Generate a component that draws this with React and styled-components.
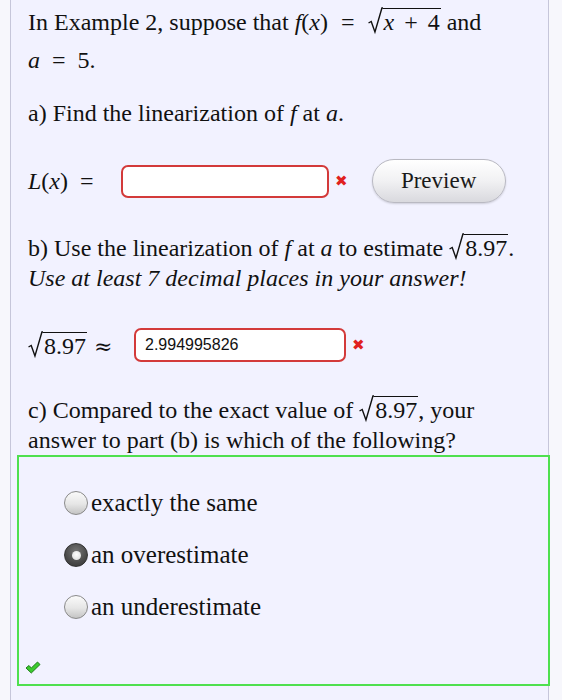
import React from 'react';
import styled, { createGlobalStyle } from 'styled-components';

const GlobalStyle = createGlobalStyle`
  html, body {
    margin: 0;
    padding: 0;
    background: #f7f7fc;
  }
  body {
    font-family: "Liberation Serif", "Times New Roman", serif;
    color: #111;
  }
`;

const Sqrt = ({ children }) => (
  <SqrtWrap>
    <Radical viewBox="0 0 14 28" preserveAspectRatio="none">
      <path d="M0.5 16 L3 14.5 L6.5 25 L13 1 L14 1" fill="none" stroke="#111" strokeWidth="1.3" />
    </Radical>
    <Radicand>{children}</Radicand>
  </SqrtWrap>
);

const Cross = ({ gap }) => <RedCross $gap={gap}>✖</RedCross>;

const Radio = ({ checked }) => (
  <RadioCircle $checked={checked}>
    {checked && <RadioDot />}
  </RadioCircle>
);

const Option = ({ checked, label }) => (
  <OptionRow>
    <Radio checked={checked} />
    <OptionLabel>{label}</OptionLabel>
  </OptionRow>
);

const CheckMark = () => (
  <svg width="16" height="13" viewBox="0 0 16 13">
    <path d="M1 7 L4 4.5 L6.3 7 L12.5 1 L15 3.5 L6.3 12 Z" fill="#3ccb2e" stroke="#1f7d1a" strokeWidth="1" strokeLinejoin="round" />
  </svg>
);

export default function App() {
  return (
    <>
      <GlobalStyle />
      <Panel>
        <Intro>
          In Example 2, suppose that <I>f</I>(<I>x</I>)<Op $gap={13}>=</Op><Sqrt><I>x</I><Op $gap={10}>+</Op>4</Sqrt> and
          <br />
          <I>a</I><Op $gap={12}>=</Op>5.
        </Intro>

        <Para $top={19}>
          a) Find the linearization of <I>f</I> at <I>a</I>.
        </Para>

        <AnswerRow $top={31}>
          <MathLabel $width={93}>
            <I>L</I>(<I>x</I>)<Op $gap={12}>=</Op>
          </MathLabel>
          <AnswerInput $width={208} $height={33} />
          <Cross gap={24} />
          <PreviewButton>Preview</PreviewButton>
        </AnswerRow>

        <Para $top={30}>
          b) Use the linearization of <I>f</I> at <I>a</I> to estimate <Sqrt>8.97</Sqrt>.
          <br />
          <I>Use at least 7 decimal places in your answer!</I>
        </Para>

        <AnswerRow $top={30}>
          <MathLabel $width={106}>
            <Sqrt>8.97</Sqrt><Approx>≈</Approx>
          </MathLabel>
          <AnswerInput $width={212} $height={34}>2.994995826</AnswerInput>
          <Cross gap={0} />
        </AnswerRow>

        <Para $top={28}>
          c) Compared to the exact value of <Sqrt>8.97</Sqrt>, your
          <br />
          answer to part (b) is which of the following?
        </Para>

        <ChoiceBox>
          <Option label="exactly the same" />
          <Option checked label="an overestimate" />
          <Option label="an underestimate" />
          <Status>
            <CheckMark />
          </Status>
        </ChoiceBox>
      </Panel>
    </>
  );
}

const Panel = styled.div`
  box-sizing: border-box;
  margin-left: 10px;
  width: 539px;
  min-height: 700px;
  padding: 3px 10px 0 17px;
  background: #f2f2ff;
  border-left: 1px solid #c6c6da;
  border-right: 1px solid #c6c6da;
  font-size: 24px;
`;

const Intro = styled.div`
  line-height: 38px;
  white-space: nowrap;
`;

const Para = styled.div`
  margin-top: ${p => p.$top}px;
  line-height: 30px;
  white-space: nowrap;
`;

const I = styled.i`
  font-style: italic;
`;

const Op = styled.span`
  margin: 0 ${p => p.$gap}px;
`;

const Approx = styled.span`
  font-family: "DejaVu Serif", serif;
  font-size: 22px;
  margin-left: 7px;
`;

const SqrtWrap = styled.span`
  display: inline-flex;
  align-items: stretch;
  vertical-align: -5px;
  height: 28px;
  line-height: 28px;
`;

const Radical = styled.svg`
  width: 15px;
  height: 28px;
  flex: none;
`;

const Radicand = styled.span`
  border-top: 1.3px solid #111;
  padding: 0 1px;
  margin-top: 1px;
  line-height: 26px;
`;

const AnswerRow = styled.div`
  margin-top: ${p => p.$top}px;
  display: flex;
  align-items: center;
  min-height: 44px;
`;

const MathLabel = styled.span`
  box-sizing: border-box;
  width: ${p => p.$width}px;
  flex: none;
  white-space: nowrap;
`;

const AnswerInput = styled.div`
  box-sizing: border-box;
  width: ${p => p.$width}px;
  height: ${p => p.$height}px;
  border: 2px solid #d33a3a;
  border-radius: 7px;
  background: #fff;
  padding-left: 9px;
  display: flex;
  align-items: center;
  font-family: "Liberation Sans", Arial, sans-serif;
  font-size: 16px;
  color: #111;
`;

const RedCross = styled.span`
  color: #e02020;
  font-family: "DejaVu Sans", sans-serif;
  font-size: 15px;
  margin-left: 6px;
  margin-right: ${p => p.$gap}px;
`;

const PreviewButton = styled.button`
  width: 134px;
  height: 44px;
  border-radius: 22px;
  border: 1px solid #b9b9c2;
  background: linear-gradient(to bottom, #ffffff 0%, #f1f1f3 50%, #d9d9de 100%);
  box-shadow: 0 1px 2px rgba(0, 0, 0, 0.15);
  font-family: "Liberation Serif", "Times New Roman", serif;
  font-size: 23px;
  color: #1a1a1a;
  padding: 0;
`;

const ChoiceBox = styled.div`
  box-sizing: border-box;
  margin-left: -11px;
  width: 533px;
  height: 231px;
  border: 2px solid #4fe04f;
  padding: 20px 0 0 45px;
  position: relative;
`;

const OptionRow = styled.div`
  display: flex;
  align-items: center;
  height: 52px;
`;

const RadioCircle = styled.span`
  box-sizing: border-box;
  width: 24px;
  height: 24px;
  border-radius: 50%;
  margin-right: 3px;
  display: flex;
  align-items: center;
  justify-content: center;
  border: 1px solid ${p => (p.$checked ? '#333' : '#8a8a8a')};
  background: ${p =>
    p.$checked
      ? 'radial-gradient(circle at 50% 35%, #777 0%, #4a4a4a 60%, #333 100%)'
      : 'linear-gradient(to bottom, #fafafa 0%, #e6e6e6 55%, #c4c4c4 100%)'};
`;

const RadioDot = styled.span`
  width: 9px;
  height: 9px;
  border-radius: 50%;
  background: radial-gradient(circle at 50% 40%, #ffffff 0%, #d8d8d8 100%);
`;

const OptionLabel = styled.span`
  font-size: 25px;
`;

const Status = styled.div`
  position: absolute;
  left: 6px;
  bottom: 10px;
  line-height: 0;
`;
